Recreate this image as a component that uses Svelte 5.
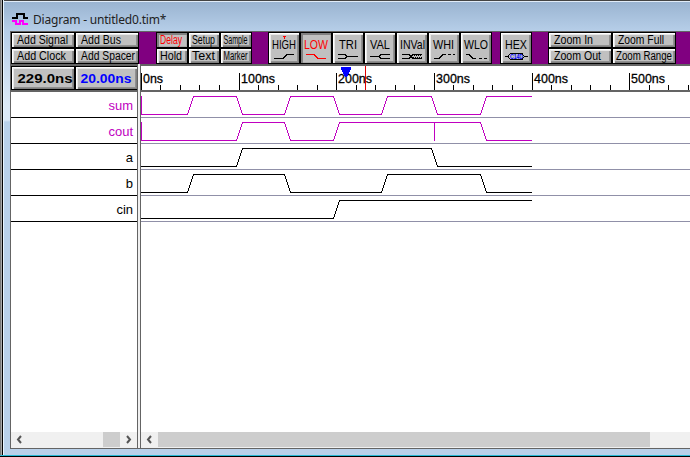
<script>
  const wide = [['Add Signal', 51], ['Add Bus', 40], ['Add Clock', 49], ['Add Spacer', 54]];
  const modes = [['Delay', 3, 22], ['Setup', 3, 23], ['Sample', 2.5, 24], ['Hold', 3, 22], ['Text', 3, 23], ['Marker', 2.5, 24]];
  const zooms = [['Zoom In', 5, 39], ['Zoom Full', 5, 46], ['Zoom Out', 5, 47], ['Zoom Range', 3, 56]];
  const states = [
    { n: 'HIGH', x: 3, w: 24, d: 'M5 25H14L18 21H25' },
    { n: 'LOW', x: 3, w: 24, d: 'M5 21H13L17 25H25' },
    { n: 'TRI', x: 6, w: 18, d: 'M5 21H12L14 23H25M5 25H12L14 23' },
    { n: 'VAL', x: 5, w: 20, d: 'M5 23H14L16 21H25M14 23L16 25H25' },
    { n: 'INVal', x: 3, w: 25, d: 'M5 21H12L16 25H25M5 25H12L16 21H25' },
    { n: 'WHI', x: 4, w: 21, d: 'M5 25H10L14 21H17M19 21H22M24 21H26' },
    { n: 'WLO', x: 3, w: 24, d: 'M5 21H8L12 25H15M18 25H21M23 25H26' }
  ];
  const ticks = Array.from({ length: 29 }, (_, i) => ({ x: Math.floor(i * 19.53 + 0.4), major: i % 5 === 0, label: i * 20 + 'ns' }));
  const signals = [
    { n: 'sum', c: '#c000c0', e: [47, 96, 144, 193, 241, 291, 340], edge: true },
    { n: 'cout', c: '#c000c0', e: [96, 144, 193, 340], edge: true, glitch: 293 },
    { n: 'a', c: '#000', e: [96, 291] },
    { n: 'b', c: '#000', e: [47, 144, 241, 340] },
    { n: 'cin', c: '#000', e: [193] }
  ];
  function wave(s) {
    let y = 22.5;
    let d = s.edge ? 'M.5 4V22.5' : 'M0 22.5';
    for (const x of s.e) {
      d += `H${x - 0.5}`;
      y = y > 10 ? 4.5 : 22.5;
      d += `L${x + 5.5} ${y}`;
    }
    d += 'H391';
    if (s.glitch) d += `M${s.glitch + 0.5} 4V23`;
    return d;
  }
</script>

{#snippet caption(t, x, y, w, size = 12)}
  <text {x} {y} font-size={size} textLength={w} lengthAdjust="spacingAndGlyphs">{t}</text>
{/snippet}

<div class="window">
  <header>
    <svg width="18" height="16" viewBox="0 0 18 16" fill="none" stroke-width="2" shape-rendering="crispEdges">
      <path d="M0 7H5V3H12V7H16" stroke="#000" />
      <path d="M0 10H4V13H8V10H11V13H16" stroke="#f0f" />
    </svg>
    <span>Diagram - untitled0.tim*</span>
  </header>
  <div class="body">
    <div class="toolbar">
      <div class="group two">
        {#each wide as [t, w]}
          <button><svg width="62" height="14">{@render caption(t, 5, 11, w)}</svg></button>
        {/each}
      </div>
      <div class="group three">
        {#each modes as [t, x, w], i}
          <button class:pressed={i === 0}><svg width="30" height="14">{@render caption(t, x, 11, w)}</svg></button>
        {/each}
      </div>
      <div class="group states">
        {#each states as s, i}
          <button class:pressed={i === 1}>
            <svg width="30" height="30">
              {@render caption(s.n, s.x, 16, s.w, 13)}
              <path d={s.d} transform="translate(0 .5)" fill="none" stroke="currentColor" shape-rendering="crispEdges" />
              {#if i === 0}<path d="M14 3h3v1h-1v2h-1v-2h-1z" fill="red" />{/if}
              {#if i === 4}<path d="M15 22.5H25M16 24.5H25" stroke="#000" stroke-dasharray="1 1" />{/if}
            </svg>
          </button>
        {/each}
      </div>
      <div class="group hex">
        <button>
          <svg width="30" height="30">
            {@render caption('HEX', 4, 16, 22, 13)}
            <path d="M4 23.5H7L9.5 20.5H21L23.500 23.5H27M7 23.5L9.5 26.5H21L23.500 23.5" fill="none" stroke="#000" shape-rendering="crispEdges" />
            <text x="9" y="26" class="tiny" font-size="6.500" textLength="13" lengthAdjust="spacingAndGlyphs">C14D</text>
          </svg>
        </button>
      </div>
      <div class="group two zoom">
        {#each zooms as [t, x, w]}
          <button><svg width="62" height="14">{@render caption(t, x, 11, w)}</svg></button>
        {/each}
      </div>
    </div>
    <div class="panes">
      <section class="names">
        <div class="times">
          <button><svg width="62" height="22">{@render caption('229.0ns', 5.5, 16, 55, 13.5)}</svg></button>
          <button class="blue"><svg width="61" height="22">{@render caption('20.00ns', 4.5, 16, 51, 13.5)}</svg></button>
        </div>
        <div class="list">
          {#each signals as s}<div class="name" style:color={s.c}>{s.n}</div>{/each}
        </div>
        <div class="scroll">
          <svg width="17" height="15"><path d="M10 4L7 7.5L10 11" /></svg>
          <i class="space"></i><i class="thumb small"></i>
          <svg width="17" height="15"><path d="M7 4L10 7.5L7 11" /></svg>
        </div>
      </section>
      <section class="graph">
        <svg class="ruler" width="549" height="24">
          <g shape-rendering="crispEdges">
            {#each ticks as t}<rect x={t.x} y={t.major ? 7 : 19} width="1" height={t.major ? 17 : 5} />{/each}
          </g>
          {#each ticks.filter((t) => t.major) as t}
            <text x={t.x + 2} y="17" font-size="13" textLength={t.x ? 34 : 20} lengthAdjust="spacingAndGlyphs">{t.label}</text>
          {/each}
          <path d="M200 1h10v3h-1v2h-1v2h-1v2h-1v1h-2v-1h-1v-2h-1v-2h-1v-2h-1z" fill="#00f" shape-rendering="crispEdges" />
          <rect x="224" width="1" height="24" fill="#e00000" />
        </svg>
        <div class="waves">
          {#each signals as s}
            <svg class="wave" width="549" height="25"><path d={wave(s)} fill="none" stroke={s.c} shape-rendering="crispEdges" /></svg>
          {/each}
        </div>
        <div class="scroll">
          <svg width="17" height="15"><path d="M10 4L7 7.5L10 11" /></svg>
          <i class="thumb long"></i>
        </div>
      </section>
    </div>
  </div>
</div>

<style>
  :global(body) { margin: 0; overflow: hidden; }
  .window {
    box-sizing: border-box; width: 690px; height: 457px; padding-left: 4px;
    background: linear-gradient(90deg, #777 0 1px, #aaa 1px 2px, #000 2px 3px, #e8f5ff 3px 4px, transparent 4px),
      linear-gradient(#444 0 1px, #e1ecf8 1px 2px, #9ab4d1 2px, #b6cee8 31px, #dce9f7 105px, #dce9f7 120px, #b9d1ea 122px, #b9d1ea 455px);
    border-bottom: 1px solid #000; box-shadow: inset 0 -1px #27b9d5;
    font-family: "Liberation Sans", Arial, sans-serif; color: #000;
  }
  header { display: flex; height: 31px; padding-left: 8px; box-sizing: border-box; align-items: flex-start; }
  header svg { margin-top: 11px; flex: none; }
  header span { margin: 11px 0 0 3px; font: 12px/18px "Noto Sans", "Open Sans", sans-serif; color: #222; letter-spacing: -.2px; white-space: nowrap; }
  .body { margin-left: 6px; width: 680px; height: 418px; box-sizing: border-box; border-left: 1px solid #646464; border-bottom: 1px solid #646464; border-top: 1px solid #646464; }
  .toolbar { display: flex; height: 32px; background: #800080; }
  .group { display: grid; background: #000; box-sizing: border-box; padding: 1px; gap: 2px; height: 32px; flex: none; }
  .two { width: 128px; grid-template: 14px 14px / 62px 62px; }
  .three { width: 96px; margin-left: 17px; grid-template: 14px 14px / 30px 30px 30px; }
  .states { width: 224px; margin-left: 16px; grid-template: 30px / repeat(7, 30px); }
  .hex { width: 32px; margin-left: 8px; grid-template: 30px / 30px; }
  .zoom { margin-left: 16px; }
  button { display: block; padding: 0; margin: 0; border: 0; background: #c0c0c0; box-shadow: inset 1px 1px #fff, inset 2px 2px #e8e8e8, inset -1px -1px #808080, inset -2px -2px #909090; color: #000; font-family: inherit; }
  button svg, .wave, .ruler { display: block; overflow: visible; }
  .ruler { overflow: hidden; }
  text { fill: currentColor; }
  .pressed { color: #f00; box-shadow: inset 2px 2px #808080, inset -1px -1px #aaa; }
  .tiny { fill: #00f; font-weight: bold; }
  .panes { display: flex; height: 384px; background: #f0f0f0; }
  .names { width: 126px; border-right: 1px solid #646464; display: flex; flex-direction: column; }
  .times { box-sizing: border-box; height: 28px; border-top: 2px solid #646464; border-bottom: 2px solid #646464; padding: 1px 0 1px 1px; gap: 2px; display: flex; background: #000; }
  .times button { font-weight: bold; height: 22px; }
  .times .blue { color: #00f; }
  .list, .waves { background: #fff; flex: 1; }
  .name { height: 25px; border-bottom: 1px solid #000; text-align: right; padding-right: 4px; font-size: 13px; line-height: 27px; }
  .graph { margin-left: 2px; border-left: 1px solid #646464; flex: 1; display: flex; flex-direction: column; min-width: 0; }
  .ruler { background: #fff; border-top: 2px solid #646464; border-bottom: 2px solid #646464; }
  .ruler text { stroke: #000; stroke-width: .3px; }
  .wave { border-bottom: 1px solid #9090a8; }
  .scroll { height: 16px; display: flex; background: #f0f0f0; }
  .scroll path { fill: none; stroke: #555; stroke-width: 2; }
  .space { flex: 1; }
  .thumb { background: #cdcdcd; height: 15px; }
  .small { width: 17px; }
  .long { width: 492px; }
</style>
